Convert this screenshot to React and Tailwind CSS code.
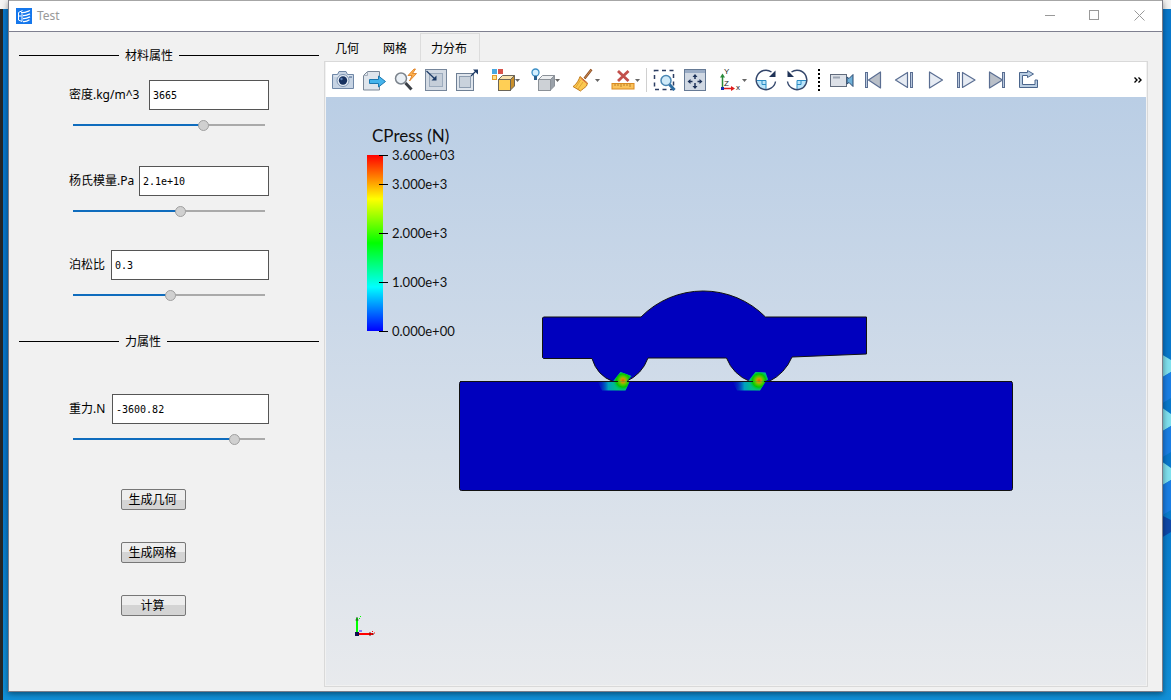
import { useState } from "react";

const MATERIAL_FIELDS = [
  { id: "density", label: "密度.kg/m^3", labelClass: "w-[80px]", value: "3665", position: 692, gapClass: "mt-[17px]" },
  { id: "young", label: "杨氏模量.Pa", labelClass: "w-[70px]", value: "2.1e+10", position: 562, gapClass: "mt-[34px]" },
  { id: "poisson", label: "泊松比", labelClass: "w-[42px]", value: "0.3", position: 508, gapClass: "mt-[32px]" },
];

const FORCE_FIELDS = [
  { id: "gravity", label: "重力.N", labelClass: "w-[43px]", value: "-3600.82", position: 862, gapClass: "mt-[45px]" },
];

const TABS = ["几何", "网格", "力分布"];

const LEGEND_MAX = 3600;
const LEGEND_LABELS = [
  { value: 3600, text: "3.600e+03" },
  { value: 3000, text: "3.000e+3" },
  { value: 2000, text: "2.000e+3" },
  { value: 1000, text: "1.000e+3" },
  { value: 0, text: "0.000e+00" },
];

const SectionTitle = ({ children }) => (
  <div className="flex h-4 items-center gap-[6px]">
    <span className="h-px w-[100px] bg-black" />
    <h2 className="text-[12px] leading-4">{children}</h2>
    <span className="h-px flex-1 bg-black" />
  </div>
);

const Field = ({ field }) => {
  const [value, setValue] = useState(field.value);
  const [position, setPosition] = useState(field.position);
  const percent = position / 10;

  return (
    <div className={`ml-[50px] w-[200px] ${field.gapClass}`}>
      <div className="flex items-center">
        <label
          htmlFor={field.id}
          className={`shrink-0 whitespace-nowrap font-['Noto_Sans','Noto_Sans_CJK_SC',sans-serif] text-[12px] leading-4 ${field.labelClass}`}
        >
          {field.label}
        </label>
        <input
          id={field.id}
          type="text"
          value={value}
          onChange={(e) => setValue(e.target.value)}
          className="h-[30px] w-full min-w-0 border border-[#555] bg-white px-[3px] font-['DejaVu_Sans_Mono',monospace] text-[10px] outline-none"
        />
      </div>
      <div className="mt-2 flex px-1">
        <input
          type="range"
          min="0"
          max="1000"
          aria-label={field.label}
          value={position}
          onChange={(e) => setPosition(Number(e.target.value))}
          style={{
            backgroundImage: `linear-gradient(to right, #0f6cbd ${percent}%, #aaaaaa ${percent}%)`,
          }}
          className="h-[14px] w-full appearance-none bg-[length:100%_2px] bg-center bg-no-repeat [&::-webkit-slider-thumb]:size-[11px] [&::-webkit-slider-thumb]:appearance-none [&::-webkit-slider-thumb]:rounded-full [&::-webkit-slider-thumb]:border [&::-webkit-slider-thumb]:border-[#a0a0a0] [&::-webkit-slider-thumb]:bg-[#d0d0d0]"
        />
      </div>
    </div>
  );
};

const ActionButton = ({ children }) => (
  <button
    type="button"
    className="flex h-[21px] w-[65px] items-center justify-center rounded-[2px] border border-[#777] bg-linear-to-b from-[#eeeeee] from-50% to-[#d4d4d4] to-50% pb-px pr-[2px] text-[12px] leading-4"
  >
    {children}
  </button>
);

/* ---------- toolbar icons ---------- */

const MenuArrow = ({ x = 25 }) => <path d={`M${x} 11h5l-2.5 3z`} fill="#666" />;

const Icon = ({ children, wide }) => (
  <svg width={wide ? 32 : 24} height="24" viewBox={wide ? "0 0 32 24" : "0 0 24 24"} fill="none" className="shrink-0 overflow-visible">
    {children}
  </svg>
);

const CameraIcon = () => (
  <Icon>
    <path d="M1.500 6.500h5l1.500-3h7l1.500 3h6v14h-21z" fill="#c6d3e3" stroke="#6f87a6" />
    <path d="M3 8h18" stroke="#eef3f8" />
    <circle cx="12" cy="12.500" r="6" fill="#e6edf5" stroke="#7c93b0" />
    <circle cx="12" cy="12.500" r="4.200" fill="#17315f" />
    <circle cx="10.500" cy="11" r="1.200" fill="#5f83b8" />
    <path d="M18 9h3" stroke="#3b5b88" />
  </Icon>
);

const ExportIcon = () => (
  <Icon>
    <path d="M5.500 3.500h12v18.500h-16v-14.500z" fill="#dfe5ec" stroke="#7a8797" />
    <path d="M1.500 7.500h4v-4" stroke="#a5afbb" />
    <path d="M7.500 11.500h9v-3.500l7 5.500-7 5.500v-3.500h-9z" fill="#45b4ec" stroke="#1b78b0" />
  </Icon>
);

const QuickSearchIcon = () => (
  <Icon>
    <circle cx="8" cy="10.500" r="5.500" fill="#e9eff5" stroke="#7b838c" strokeWidth="1.500" />
    <path d="M12.500 15l6 6.500" stroke="#3a3f46" strokeWidth="3" />
    <path d="M21 1l-6 6.500h4l-2.500 5.500 7-7.500h-4l3-4.500z" fill="#ffb24d" stroke="#d9771b" strokeWidth=".8" />
  </Icon>
);

const ArrowInIcon = () => (
  <Icon>
    <rect x="1.500" y="1.500" width="21" height="21" fill="#d3dae3" stroke="#76869b" />
    <rect x="5.500" y="5.500" width="13" height="13" fill="#c5ced9" stroke="#9cabbd" />
    <path d="M2.500 3l9 8.500" stroke="#1c3a66" strokeWidth="1.200" />
    <path d="M12.500 12.500v-5l-5 5z" fill="#1c3a66" />
  </Icon>
);

const ArrowOutIcon = () => (
  <Icon>
    <rect x="1.500" y="5.500" width="17" height="17" fill="#dfe5ec" stroke="#6e7f94" />
    <rect x="4.500" y="8.500" width="11" height="11" fill="#c9d2dc" stroke="#8d9db0" />
    <path d="M16 8l5-5" stroke="#1c3a66" strokeWidth="1.200" />
    <path d="M23 1.500v5l-5-5z" fill="#1c3a66" />
  </Icon>
);

const CubeColorsIcon = () => (
  <Icon wide>
    <rect x="2" y="1" width="5" height="5" fill="#4aa8e0" />
    <rect x="8" y="1" width="5" height="5" fill="#d9534a" />
    <rect x="2.500" y="7.500" width="4" height="4" fill="#fbe08b" stroke="#e39a28" />
    <path d="M8.500 11.500l4-4h12l-4 4z" fill="#f7e2ae" stroke="#6b6558" />
    <path d="M20.500 11.500l4-4v10.500l-4 4z" fill="#c98f2b" stroke="#6b6558" />
    <rect x="8.500" y="11.500" width="12" height="11" fill="#ffcf55" stroke="#6b6558" />
    <MenuArrow />
  </Icon>
);

const CubeLightIcon = () => (
  <Icon wide>
    <path d="M8.500 11.500l4-4h12l-4 4z" fill="#eceef0" stroke="#8b9198" />
    <path d="M20.500 11.500l4-4v10.500l-4 4z" fill="#9aa1a9" stroke="#8b9198" />
    <rect x="8.500" y="11.500" width="12" height="11" fill="#cdd1d6" stroke="#8b9198" />
    <circle cx="5.500" cy="4.500" r="3.500" fill="#d4efff" stroke="#3c8fc6" strokeWidth="1.300" />
    <path d="M5.500 8v4" stroke="#2a5f8e" strokeWidth="3" />
    <MenuArrow />
  </Icon>
);

const BroomIcon = () => (
  <Icon wide>
    <path d="M21.500 1.500l-7 9" stroke="#8a4e26" strokeWidth="2.500" />
    <path d="M21.500 1.500l-7 9" stroke="#d08c4f" />
    <path d="M10 8.500l7.500 6.500-1 3c-2 2-4.500 3.500-6 5l-7.500-4.500c2-1 5.500-5 7-10z" fill="#fbc850" stroke="#c17a1b" />
    <path d="M10.500 12l-4.500 7M13 14l-5 7" stroke="#d89a2d" strokeWidth=".8" />
    <path d="M10.500 10l6.500 5.500" stroke="#d9634a" />
    <MenuArrow />
  </Icon>
);

const ClearRulerIcon = () => (
  <Icon wide>
    <path d="M8 3l10.500 10M18.500 3l-10.500 10" stroke="#c2504c" strokeWidth="2.800" />
    <rect x="2" y="15.500" width="22" height="5.500" fill="#fbc25a" stroke="#d98a22" />
    <path d="M5 16v2M8 16v2M11 16v3M14 16v2M17 16v2M20 16v3" stroke="#a8701f" strokeWidth=".8" />
    <MenuArrow />
  </Icon>
);

const ZoomBoxIcon = () => (
  <Icon>
    <rect x="2.500" y="2.500" width="19" height="19" stroke="#2c3e63" strokeWidth="1.500" strokeDasharray="4 3.500" />
    <circle cx="14" cy="12.500" r="5" fill="#cfeaf9" stroke="#4a87b4" strokeWidth="1.500" />
    <path d="M17.500 16.500l5 5.500" stroke="#2d6ea3" strokeWidth="3" />
  </Icon>
);

const FitIcon = () => (
  <Icon>
    <rect x="1.500" y="1.500" width="21" height="21" fill="#d0d8e3" stroke="#667a95" />
    <path d="M2 3.500h20" stroke="#9aacc5" strokeWidth="3" />
    <path d="M12 8v3M12 15v3M6.500 13.500h3M14.500 13.500h3" stroke="#1c3158" strokeWidth="1.500" />
    <path d="M12 6l-2.500 3h5zM12 21l-2.500-3h5zM4.500 13.500l3-2.500v5zM19.500 13.500l-3-2.500v5z" fill="#1c3158" />
  </Icon>
);

const AxesIcon = () => (
  <Icon wide>
    <path d="M8.500 20v-12" stroke="#2a8a3a" strokeWidth="1.500" />
    <path d="M8.500 5.500l-2.500 4h5z" fill="#2a8a3a" />
    <path d="M8.500 20.500h9" stroke="#e01b1b" strokeWidth="1.500" />
    <path d="M21 20.500l-4-2.500v5z" fill="#e01b1b" />
    <rect x="7" y="19" width="3" height="3" fill="#1a2fb0" />
    <g fill="#222" fontFamily="Liberation Sans, sans-serif" fontSize="8">
      <text x="10" y="6">Y</text>
      <text x="10" y="18">Z</text>
      <text x="22" y="22">x</text>
    </g>
    <MenuArrow x={28} />
  </Icon>
);

const RotateIcon = ({ flip }) => (
  <Icon>
    <g transform={flip ? "translate(24 0) scale(-1 1)" : undefined}>
      <path d="M12 12v9.500a9.500 9.500 0 0 1-9.500-9.500z" fill="#b9e4fa" />
      <path d="M3 12.500h9v9" stroke="#2b8cc4" />
      <path d="M8 12.500v4h4" stroke="#2b8cc4" />
      <path d="M21.500 13.500a9.700 9.700 0 1 1-4-9.500" stroke="#33466b" strokeWidth="1.400" />
      <path d="M21.500 2.500v6.500h-6.500z" fill="#1f3357" />
    </g>
  </Icon>
);

const VideoIcon = () => (
  <Icon>
    <rect x=".5" y="6.500" width="16" height="12" fill="#dde1e8" stroke="#626c7d" />
    <path d="M3 9.500h7" stroke="#9ca5b3" strokeWidth="2" />
    <path d="M17 9l2 1.500 4-4v12l-4-4-2 1.500z" fill="#6fb0d8" stroke="#2d4a70" />
  </Icon>
);

const PLAYER_STROKE = "#5a6e92";

const PlayerIcon = ({ bar, triangle, solid }) => (
  <Icon>
    <path d={triangle} fill={solid ? "#b9bfc8" : "#e6ebf3"} stroke={PLAYER_STROKE} strokeWidth="1.200" strokeLinejoin="round" />
    {bar !== undefined && <rect x={bar} y="4.500" width="2" height="15" fill="#b9c9de" stroke={PLAYER_STROKE} />}
  </Icon>
);

const LoopIcon = () => (
  <Icon>
    <path
      d="M11.500 2.500l6 3.500-6 3.500v-2h-5v9h12.500v-4.500h2.500v7.500h-18v-15h8z"
      fill="#b9cde2"
      stroke="#4a658c"
      strokeLinejoin="round"
    />
  </Icon>
);

const ToolButton = ({ label, wide, children }) => (
  <button
    type="button"
    aria-label={label}
    className={`flex h-8 shrink-0 items-center justify-center ${wide ? "w-10" : "w-[31px]"}`}
  >
    {children}
  </button>
);

const Toolbar = () => (
  <div className="flex h-[35px] items-center bg-white pl-px">
    <ToolButton label="Screenshot"><CameraIcon /></ToolButton>
    <ToolButton label="Export"><ExportIcon /></ToolButton>
    <ToolButton label="Quick search"><QuickSearchIcon /></ToolButton>
    <ToolButton label="Zoom in"><ArrowInIcon /></ToolButton>
    <ToolButton label="Zoom out"><ArrowOutIcon /></ToolButton>
    <span className="w-1 shrink-0" />
    <ToolButton label="Colors" wide><CubeColorsIcon /></ToolButton>
    <ToolButton label="Lighting" wide><CubeLightIcon /></ToolButton>
    <ToolButton label="Clean" wide><BroomIcon /></ToolButton>
    <ToolButton label="Clear measurements" wide><ClearRulerIcon /></ToolButton>
    <span className="mr-px h-6 w-px shrink-0 bg-[#d0d0d0]" />
    <ToolButton label="Zoom box"><ZoomBoxIcon /></ToolButton>
    <ToolButton label="Fit"><FitIcon /></ToolButton>
    <ToolButton label="View axes" wide><AxesIcon /></ToolButton>
    <ToolButton label="Rotate clockwise"><RotateIcon /></ToolButton>
    <ToolButton label="Rotate counterclockwise"><RotateIcon flip /></ToolButton>
    <span className="mx-[6px] h-[22px] shrink-0 border-l-2 border-dotted border-black" />
    <ToolButton label="Record"><VideoIcon /></ToolButton>
    <ToolButton label="First frame"><PlayerIcon bar={4.5} triangle="M19.500 4v16l-12-8z" solid /></ToolButton>
    <ToolButton label="Previous frame"><PlayerIcon bar={18.5} triangle="M15.500 4.500v15l-12-7.500z" /></ToolButton>
    <ToolButton label="Play"><PlayerIcon triangle="M6.500 4v16l13-8z" /></ToolButton>
    <ToolButton label="Next frame"><PlayerIcon bar={3.5} triangle="M8.500 4.500v15l12.500-7.500z" /></ToolButton>
    <ToolButton label="Last frame"><PlayerIcon bar={17.5} triangle="M4.500 4v16l13-8z" solid /></ToolButton>
    <ToolButton label="Loop"><LoopIcon /></ToolButton>
    <button type="button" aria-label="More" className="ml-auto flex h-8 w-4 shrink-0 items-center justify-center">
      <svg width="8" height="6" viewBox="0 0 8 6" fill="none">
        <path d="M.5.5l2.500 2.500-2.500 2.500M4.500.5l2.500 2.500-2.500 2.500" stroke="#000" strokeWidth="1.400" />
      </svg>
    </button>
  </div>
);

/* ---------- result view ---------- */

const Legend = () => (
  <div className="absolute left-[41px] top-[29px] font-['Lato',sans-serif] text-[#111]">
    <div className="pl-[5px] text-[17px] leading-5">CPress (N)</div>
    <div className="relative mt-[9px] h-[176px] w-4 bg-[linear-gradient(to_bottom,#f00,#ff0_25%,#0f0_50%,#0ff_75%,#00f)]">
      {LEGEND_LABELS.map((label) => (
        <div
          key={label.text}
          style={{ top: `${(1 - label.value / LEGEND_MAX) * 100}%` }}
          className="absolute left-3 flex h-4 -translate-y-1/2 items-center gap-1 text-[13px] leading-4"
        >
          <span className="h-px w-[9px] bg-black" />
          {label.text}
        </div>
      ))}
    </div>
  </div>
);

const HotSpot = ({ id, cx, cy, body, ground }) => (
  <g>
    <defs>
      <linearGradient id={`${id}-tail`} gradientUnits="userSpaceOnUse" x1={cx - 28} y1={cy} x2={cx + 10} y2={cy}>
        <stop offset="0" stopColor="#0000be" stopOpacity="0" />
        <stop offset=".35" stopColor="#00a0c0" />
        <stop offset=".6" stopColor="#00c878" />
        <stop offset="1" stopColor="#00b4a0" />
      </linearGradient>
      <radialGradient id={`${id}-core`} gradientUnits="userSpaceOnUse" cx={cx} cy={cy} r="11">
        <stop offset="0" stopColor="#e06400" />
        <stop offset=".2" stopColor="#c8a000" />
        <stop offset=".35" stopColor="#64c800" />
        <stop offset=".6" stopColor="#00c800" />
        <stop offset="1" stopColor="#00b4a0" stopOpacity="0" />
      </radialGradient>
    </defs>
    <g filter="url(#soften)">
      <path d={ground} fill={`url(#${id}-tail)`} />
      <path d={body} fill="#00bea0" />
      <path d={ground} fill={`url(#${id}-core)`} />
      <path d={body} fill={`url(#${id}-core)`} />
    </g>
  </g>
);

const Model = () => (
  <svg viewBox="0 0 820 587" className="absolute inset-0 h-full w-full">
    <defs>
      <filter id="soften" x="-20%" y="-20%" width="140%" height="140%">
        <feGaussianBlur stdDeviation=".7" />
      </filter>
    </defs>
    <g fill="#0000be" stroke="#111">
      <rect x="133.500" y="284" width="553" height="109" rx="2" />
      <path d="M217.500 219.500H315A87.500 87.500 0 0 1 439.500 219.500H540.500V256.500L466 259.500Q459 276 443 284H424Q407 277 400.500 260.500H322Q316 277 300 284H287Q271 278 266 261H217.500L216.500 260V220.500Z" />
    </g>
    <HotSpot
      id="front"
      cx={297}
      cy={283}
      body="M294.500 274.500L305.500 278.500L300.500 284H287Z"
      ground="M271.500 284H303.500L299.500 293H276Z"
    />
    <HotSpot
      id="rear"
      cx={433}
      cy={283}
      body="M429.500 274.500L439.500 275L442 282L438 284H422Z"
      ground="M406.500 284H439.500L434 293H411Z"
    />
    <path d="M134 284H292M301 284H427M438 284H686" stroke="#111" />
  </svg>
);

const Triad = () => (
  <svg width="22" height="22" viewBox="0 0 22 22" fill="none" className="absolute bottom-[48px] left-[29px]">
    <path d="M2 19V3" stroke="#00ff00" strokeWidth="2" />
    <path d="M2 2v3M.5 5h3" stroke="#206020" />
    <path d="M5 1l1 1M4 3.500h1" stroke="#00ff00" />
    <path d="M3 19h15" stroke="#ff0000" strokeWidth="2" />
    <path d="M15 17v4M17 19h2" stroke="#6a1010" />
    <path d="M17 16.500h1M19 18h1" stroke="#ff0000" />
    <path d="M4 16h3" stroke="#2020ff" />
    <rect x="0" y="17" width="4" height="4" fill="#101050" />
  </svg>
);

/* ---------- window ---------- */

const AppLogo = () => (
  <svg width="16" height="16" viewBox="0 0 16 16" fill="none">
    <rect width="16" height="16" fill="#1577ec" />
    <path d="M2.500 4.500v7.500l3.500 1.500M2.500 8h3M2.500 4.500l4-2M6 5.500v8" stroke="#fff" />
    <path d="M5 4.500c3 .5 5-.5 9-2M7 7.500c3 .3 5-.7 7-1.700M7 10.500c3 .3 5-.7 7-1.700M7 13.500c3 .3 5-.7 6.500-1.700" stroke="#fff" strokeWidth="1.300" />
  </svg>
);

const TitleBar = () => (
  <header className="flex h-[31px] items-center border-t border-[#a6a6a6] bg-white pl-[7px]">
    <AppLogo />
    <h1 className="ml-[5px] font-['Noto_Sans',sans-serif] text-[12px] text-[#999]">Test</h1>
    <div className="ml-auto flex h-full pb-px">
      <button type="button" aria-label="Minimize" className="flex w-[45px] items-center justify-center">
        <svg width="10" height="11" stroke="#999"><path d="M0 5.500h10" /></svg>
      </button>
      <button type="button" aria-label="Maximize" className="flex w-[45px] items-center justify-center">
        <svg width="11" height="11" fill="none" stroke="#999"><rect x=".5" y=".5" width="9" height="9" /></svg>
      </button>
      <button type="button" aria-label="Close" className="flex w-[45px] items-center justify-center">
        <svg width="11" height="11" stroke="#999"><path d="M.5.5l10 10M10.500.5l-10 10" /></svg>
      </button>
    </div>
  </header>
);

const Wallpaper = () => (
  <div className="absolute inset-0 bg-linear-to-b from-[#0878cc] from-70% to-[#1190d8]">
    <div className="absolute inset-y-0 left-0 w-[3px] bg-[#262626]" />
    <div className="absolute inset-x-0 top-0 h-[9px] bg-[#f4f4f4]" />
    <svg width="10" height="260" className="absolute right-0 top-[350px]">
      <path d="M0 4L10 10V22L0 28ZM0 57L10 64V76L0 82ZM0 111L10 118V130L0 136Z" fill="#7fe0ee" />
      <path d="M0 28L10 22V48L0 54ZM0 82L10 76V102L0 108ZM0 136L10 130V160L0 166Z" fill="#1a7ee4" />
      <path d="M0 165L10 170V182L0 188Z" fill="#0f48a8" />
    </svg>
  </div>
);

const App = () => {
  const [activeTab, setActiveTab] = useState("力分布");

  return (
    <div className="relative flex h-screen flex-col overflow-hidden px-2 pb-2 font-['Noto_Sans_CJK_SC',sans-serif] text-black">
      <Wallpaper />
      <div className="relative flex min-h-0 flex-1 flex-col border-x border-b border-[#7d7d88] bg-[#f1f1f1] shadow-[0_2px_6px_rgba(0,0,0,0.45)]">
        <TitleBar />
        <div className="flex min-h-0 flex-1 border-t border-[#7f8090]">
          {/* Parameters */}
          <aside className="w-[315px] shrink-0 pl-[10px] pr-[5px] pt-[15px]">
            <SectionTitle>材料属性</SectionTitle>
            {MATERIAL_FIELDS.map((field) => (
              <Field key={field.id} field={field} />
            ))}
            <div className="mt-[31px]">
              <SectionTitle>力属性</SectionTitle>
            </div>
            {FORCE_FIELDS.map((field) => (
              <Field key={field.id} field={field} />
            ))}
            <div className="ml-[102px] mt-[43px] flex flex-col items-start gap-8">
              <ActionButton>生成几何</ActionButton>
              <ActionButton>生成网格</ActionButton>
              <ActionButton>计算</ActionButton>
            </div>
          </aside>

          {/* Result tabs */}
          <main className="mb-1 mr-[14px] flex min-w-0 flex-1 flex-col pt-px">
            <div role="tablist" className="flex h-7">
              {TABS.map((tab) => (
                <button
                  key={tab}
                  type="button"
                  role="tab"
                  aria-selected={tab === activeTab}
                  onClick={() => setActiveTab(tab)}
                  className={`border-x border-t pl-[10px] pr-3 text-[12px] leading-4 ${
                    tab === activeTab ? "border-[#dcdcdc]" : "border-transparent"
                  }`}
                >
                  {tab}
                </button>
              ))}
            </div>
            <div className="flex min-h-0 flex-1 flex-col border border-[#d9d9d9] p-px pt-0">
              <Toolbar />
              <div className="relative min-h-0 flex-1 overflow-hidden bg-linear-to-b from-[#bacee5] to-[#e8eaed]">
                <Model />
                <Legend />
                <Triad />
              </div>
            </div>
          </main>
        </div>
      </div>
    </div>
  );
};

export default App;
